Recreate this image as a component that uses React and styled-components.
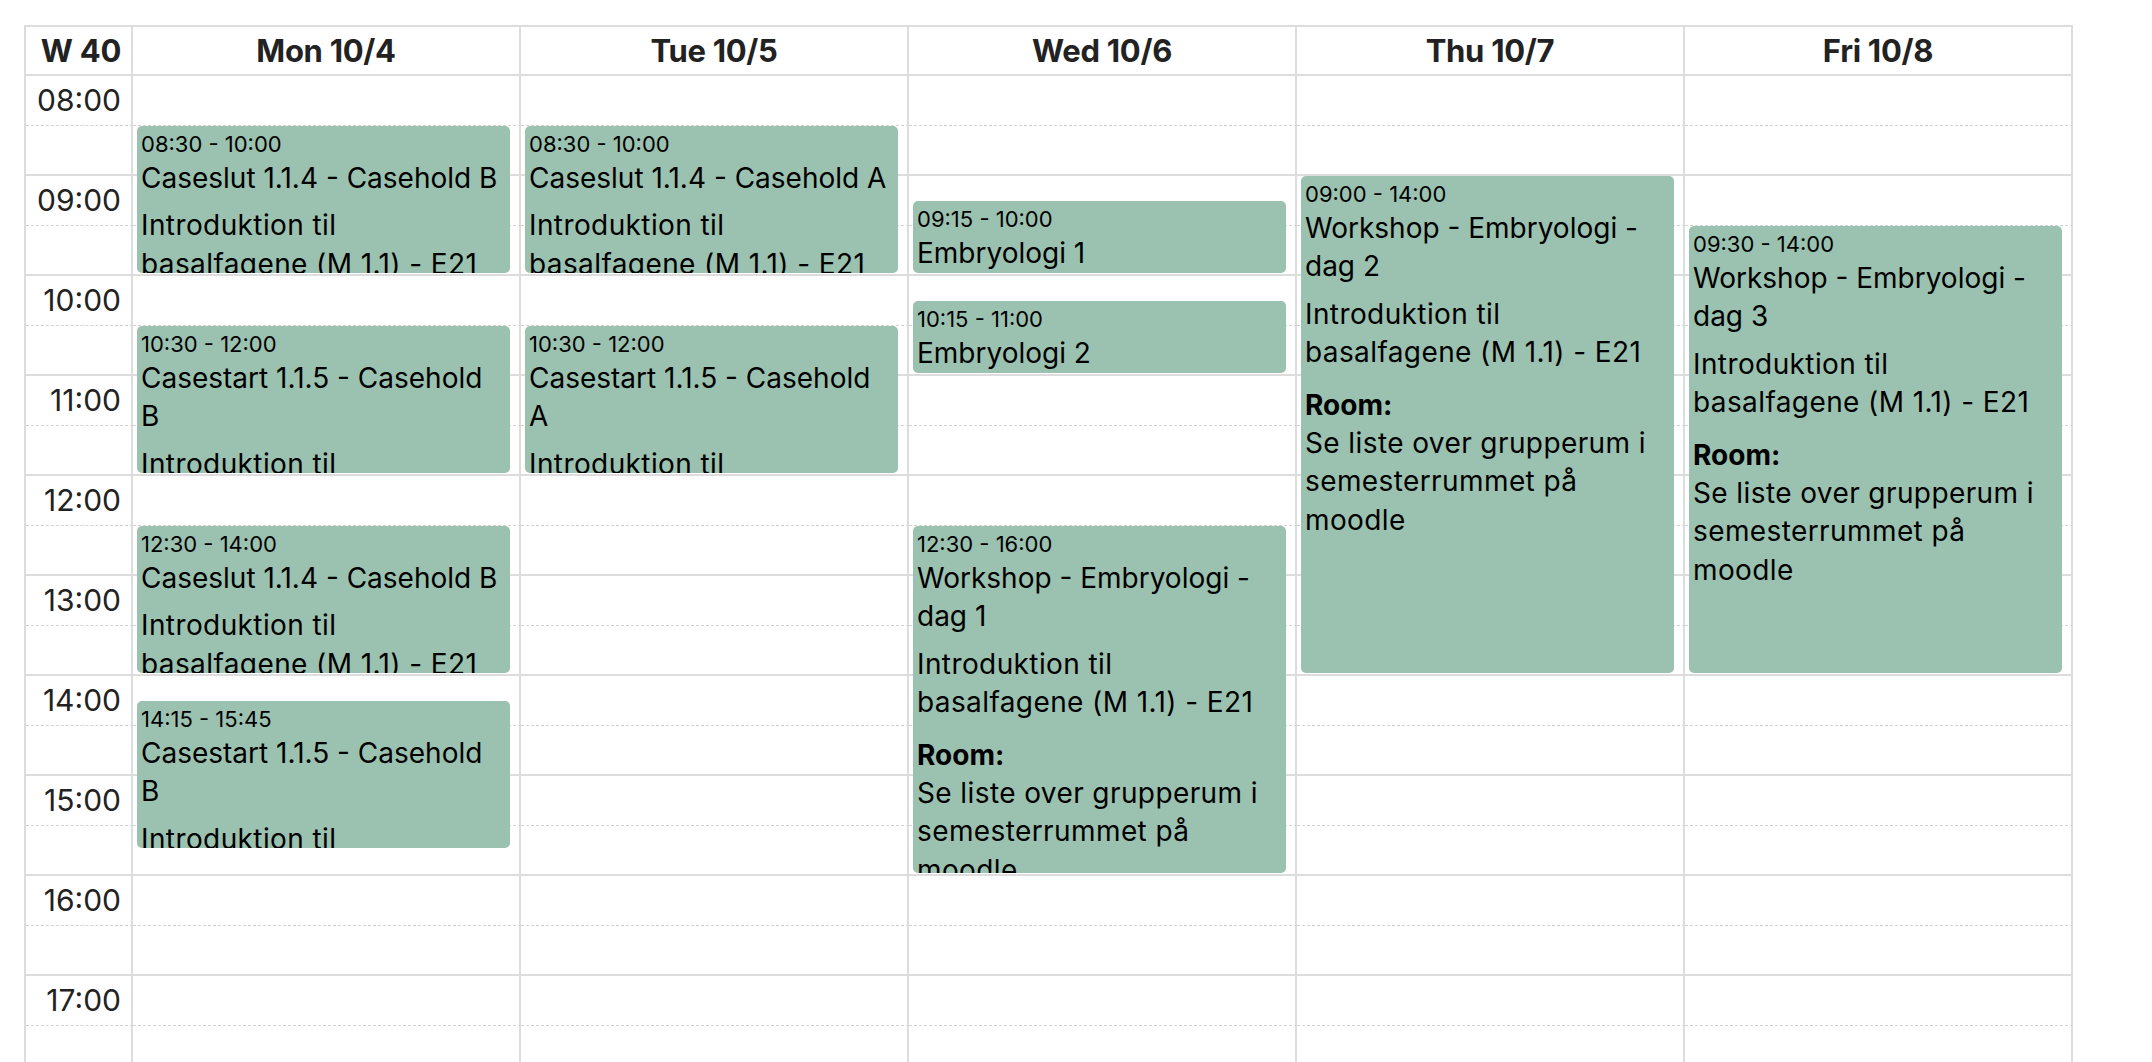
import React from "react";
import styled, { createGlobalStyle } from "styled-components";

const FONT = `Inter, "Noto Sans", sans-serif`;
const START_HOUR = 8;
const HOURS = 10;

const days = [
  {
    label: "Mon 10/4",
    events: [
      { from: "08:30", to: "10:00", title: "Caseslut 1.1.4 - Casehold B" },
      { from: "10:30", to: "12:00", title: "Casestart 1.1.5 - Casehold B" },
      { from: "12:30", to: "14:00", title: "Caseslut 1.1.4 - Casehold B" },
      { from: "14:15", to: "15:45", title: "Casestart 1.1.5 - Casehold B" },
    ],
  },
  {
    label: "Tue 10/5",
    events: [
      { from: "08:30", to: "10:00", title: "Caseslut 1.1.4 - Casehold A" },
      { from: "10:30", to: "12:00", title: "Casestart 1.1.5 - Casehold A" },
    ],
  },
  {
    label: "Wed 10/6",
    events: [
      { from: "09:15", to: "10:00", title: "Embryologi 1" },
      { from: "10:15", to: "11:00", title: "Embryologi 2" },
      { from: "12:30", to: "16:00", title: "Workshop - Embryologi - dag 1", room: true },
    ],
  },
  {
    label: "Thu 10/7",
    events: [{ from: "09:00", to: "14:00", title: "Workshop - Embryologi - dag 2", room: true }],
  },
  {
    label: "Fri 10/8",
    events: [{ from: "09:30", to: "14:00", title: "Workshop - Embryologi - dag 3", room: true }],
  },
];

const COURSE = "Introduktion til basalfagene (M 1.1) - E21";
const ROOM = "Se liste over grupperum i semesterrummet på moodle";

// quarter-hour index from the start of the day
const quarter = (t) => {
  const [h, m] = t.split(":").map(Number);
  return (h - START_HOUR) * 4 + m / 15;
};

export default function App() {
  const halves = Array.from({ length: HOURS * 2 }, (_, i) => i);
  return (
    <>
      <GlobalStyle />
      <Grid>
        <HeadCell>W 40</HeadCell>
        {days.map((d) => (
          <HeadCell key={d.label} center>
            {d.label}
          </HeadCell>
        ))}
        {halves.map((i) => (
          <React.Fragment key={i}>
            <Cell style={{ gridRow: `${2 + i * 2} / span 2`, gridColumn: 1 }} $hourEnd={i % 2 === 1}>
              {i % 2 === 0 && <TimeLabel>{String(START_HOUR + i / 2).padStart(2, "0")}:00</TimeLabel>}
            </Cell>
            {days.map((d, di) => (
              <Cell
                key={d.label}
                style={{ gridRow: `${2 + i * 2} / span 2`, gridColumn: di + 2 }}
                $hourEnd={i % 2 === 1}
              />
            ))}
          </React.Fragment>
        ))}
        {days.map((d, di) =>
          d.events.map((e) => {
            const qs = quarter(e.from);
            const qe = quarter(e.to);
            return (
              <Event key={d.label + e.from} style={{ gridColumn: di + 2, gridRow: `${2 + qs} / ${2 + qe}` }}>
                <EventTime>
                  {e.from} - {e.to}
                </EventTime>
                <EventTitle>{e.title}</EventTitle>
                {qe - qs > 3 && <EventText $gap={9}>{COURSE}</EventText>}
                {e.room && (
                  <>
                    <RoomLabel>Room:</RoomLabel>
                    <EventText>{ROOM}</EventText>
                  </>
                )}
              </Event>
            );
          })
        )}
      </Grid>
    </>
  );
}

const GlobalStyle = createGlobalStyle`
  body {
    margin: 0;
    background: #fff;
    font-family: ${FONT};
    color: #000;
  }
`;

const Grid = styled.div`
  display: grid;
  grid-template-columns: 107px repeat(5, 388px);
  grid-template-rows: 49px repeat(${HOURS * 4}, 25px);
  width: max-content;
  margin: 25px 0 0 24px;
  border-top: 2px solid #dddddd;
  border-left: 2px solid #dddddd;
`;

const HeadCell = styled.div`
  display: flex;
  align-items: center;
  justify-content: ${(p) => (p.center ? "center" : "flex-end")};
  padding-right: ${(p) => (p.center ? "0" : "10px")};
  border-right: 2px solid #dddddd;
  border-bottom: 2px solid #dddddd;
  font-weight: 700;
  font-size: 31px;
  letter-spacing: -0.3px;
  color: #222;
`;

const Cell = styled.div`
  display: flex;
  justify-content: flex-end;
  border-right: 2px solid #dddddd;
  border-bottom: ${(p) => (p.$hourEnd ? "2px solid #dddddd" : "1px dashed #d2d2d2")};
`;

const TimeLabel = styled.div`
  padding: 6px 10px 0 0;
  font-size: 30px;
  line-height: 36px;
  color: #222;
`;

const Event = styled.div`
  position: relative;
  z-index: 1;
  margin: 0 11px 3px 4px;
  padding: 3px 4px 0;
  overflow: hidden;
  border-radius: 5px;
  background: #9bc2b0;
`;

const EventTime = styled.div`
  font-size: 22px;
  line-height: 30px;
`;

const EventTitle = styled.div`
  font-size: 28px;
  line-height: 38.4px;
`;

const EventText = styled.div`
  margin-top: ${(p) => p.$gap || 0}px;
  font-size: 28px;
  line-height: 38.4px;
  letter-spacing: 0.4px;
`;

const RoomLabel = styled.div`
  margin-top: 14px;
  font-size: 28px;
  line-height: 38.4px;
  font-weight: 700;
`;
